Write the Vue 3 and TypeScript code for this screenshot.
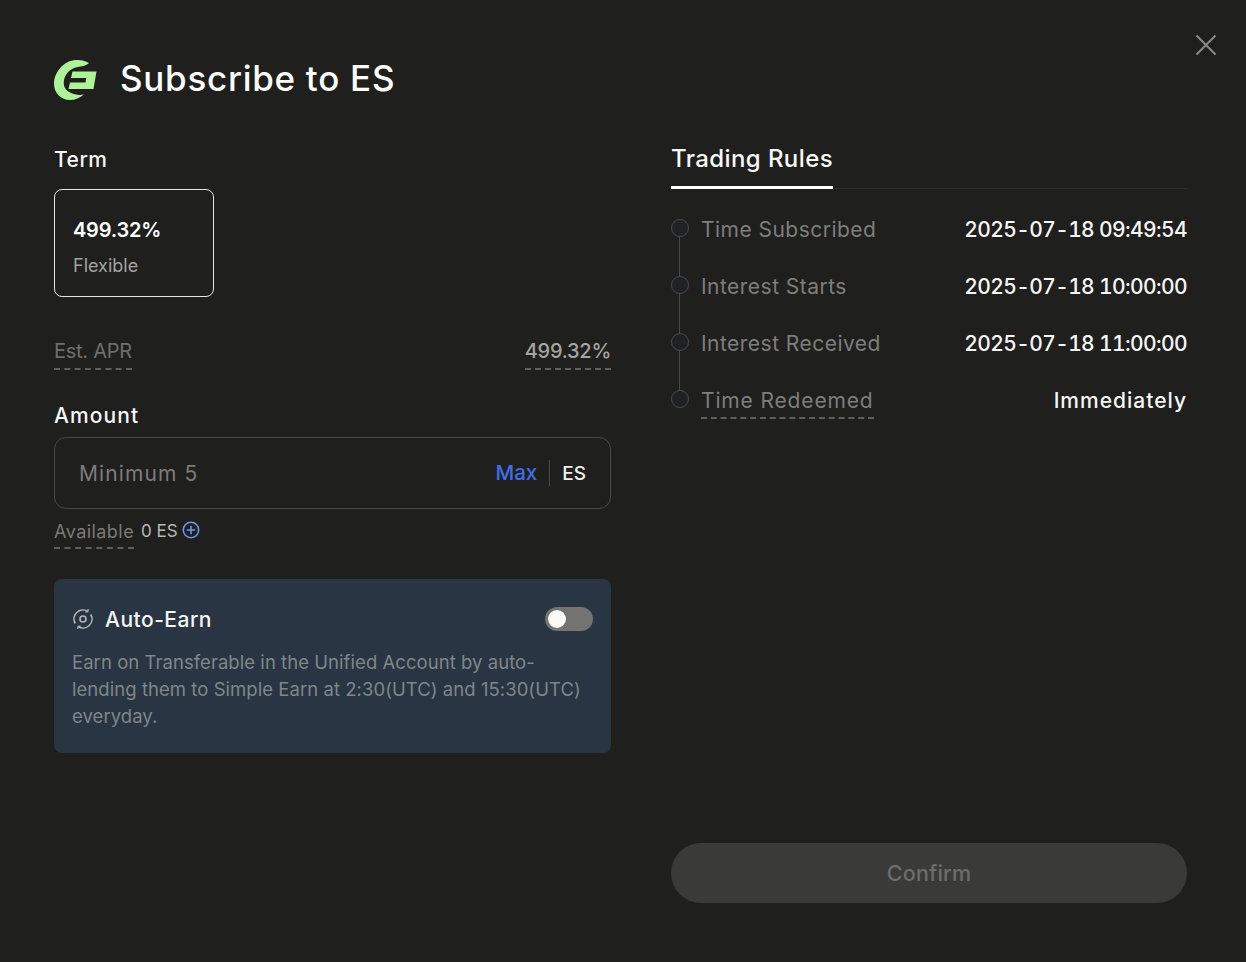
<script setup lang="ts">
const rules = [
  { label: 'Time Subscribed', value: '2025-07-18 09:49:54', dashed: false },
  { label: 'Interest Starts', value: '2025-07-18 10:00:00', dashed: false },
  { label: 'Interest Received', value: '2025-07-18 11:00:00', dashed: false },
  { label: 'Time Redeemed', value: 'Immediately', dashed: true },
]
</script>

<template>
  <div class="page">
    <button class="close" aria-label="Close">
      <svg width="22" height="22" viewBox="0 0 22 22"><path d="M1.5 1.5 20.5 20.5M20.5 1.5 1.5 20.5" stroke="#8a8a88" stroke-width="2" fill="none" /></svg>
    </button>
    <header class="head">
      <svg class="logo" width="43" height="41" viewBox="0 0 43 41">
        <path d="M35 4C31 1.500 26 0.500 22 1C10 1.500 0 13 0 25C0 34 7 41 16 41C21 41 26 39 30 35.500C25 36.500 20 35.500 16 33.500C11 31 9 27 10 21C11.500 14 17 9 24 8C27 7.500 32 7 35 4Z" fill="#aef29a" />
        <path d="M18.500 12.500H42.500L39.500 30H14.500L16 23.500H31.500L32.200 19H17Z" fill="#aef29a" />
      </svg>
      <h1>Subscribe to ES</h1>
    </header>
    <main class="cols">
      <section class="left">
        <div class="label term-label">Term</div>
        <div class="term">
          <strong>499.32%</strong>
          <span>Flexible</span>
        </div>
        <div class="apr">
          <span class="dash muted">Est. APR</span>
          <span class="dash apr-val">499.32%</span>
        </div>
        <div class="label amount-label">Amount</div>
        <div class="input">
          <span class="placeholder">Minimum 5</span>
          <span class="max">Max</span>
          <span class="unit">ES</span>
        </div>
        <div class="avail">
          <span class="dash muted">Available</span>
          <span class="bal">0 ES</span>
          <svg width="18" height="18" viewBox="0 0 18 18"><circle cx="9" cy="9" r="7.700" stroke="#6f9bf2" stroke-width="1.500" fill="none" /><path d="M9 4.800v8.400M4.800 9h8.400" stroke="#6f9bf2" stroke-width="1.500" /></svg>
        </div>
        <div class="earn">
          <div class="earn-top">
            <svg width="22" height="22" viewBox="0 0 22 22" fill="none" stroke="#b4b8bb" stroke-width="1.600">
              <path d="M3.200 15.500A9 9 0 0 1 15.800 3.400" />
              <path d="M18.800 6.500A9 9 0 0 1 6.200 18.600" />
              <path d="M16.300 1.200 15.800 3.600 13.300 3.800M5.700 20.800 6.200 18.400 8.700 18.200" stroke-width="1.300" />
              <circle cx="11" cy="11" r="3" />
            </svg>
            <span class="earn-title">Auto-Earn</span>
            <span class="toggle"><i></i></span>
          </div>
          <p>Earn on Transferable in the Unified Account by auto-lending them to Simple Earn at 2:30(UTC) and 15:30(UTC) everyday.</p>
        </div>
      </section>
      <section class="right">
        <div class="tabs"><span class="tab">Trading Rules</span></div>
        <ul class="timeline">
          <li v-for="r in rules" :key="r.label">
            <i class="dot"></i>
            <span class="rule-label" :class="{ dash: r.dashed }">{{ r.label }}</span>
            <span class="rule-value" :class="{ wide: r.dashed }">{{ r.value }}</span>
          </li>
        </ul>
        <button class="confirm">Confirm</button>
      </section>
    </main>
  </div>
</template>

<style>
html, body { background: #1f1f1d; }
</style>

<style scoped>
.page {
  position: relative;
  box-sizing: border-box;
  width: 1246px;
  height: 962px;
  padding: 58px 59px 59px 54px;
  background: #1f1f1d;
  color: #fff;
  font-family: Inter, "Liberation Sans", sans-serif;
  display: flex;
  flex-direction: column;
}
.close {
  position: absolute;
  top: 34px;
  left: 1195px;
  padding: 0;
  border: 0;
  background: none;
  line-height: 0;
}
.head { display: flex; align-items: center; gap: 23px; height: 41px; }
.logo { flex: none; margin-top: 1px; }
h1 { margin: 0; font-size: 35px; font-weight: 500; letter-spacing: 0.72px; line-height: 41px; color: #fcfcfb; }
.cols { flex: 1; display: flex; gap: 60px; margin-top: 43px; }
.left { width: 557px; flex: none; display: flex; flex-direction: column; padding-top: 4px; }
.right { flex: 1; display: flex; flex-direction: column; }
.label { font-size: 21px; font-weight: 500; line-height: 28px; color: #f6f6f5; }
.term-label { letter-spacing: 0.5px; }
.term {
  box-sizing: border-box;
  width: 160px;
  height: 108px;
  margin-top: 15px;
  padding: 27px 18px 0;
  border: 1px solid #e6e6e5;
  border-radius: 8px;
  display: flex;
  flex-direction: column;
  gap: 11px;
}
.term strong { font-size: 20px; font-weight: 600; line-height: 26px; letter-spacing: -0.2px; }
.term span { font-size: 18px; line-height: 24px; color: #a3a3a1; }
.apr { display: flex; justify-content: space-between; align-items: flex-start; margin-top: 40px; }
.dash { border-bottom: 2px dashed #5f5f5d; }
.muted { color: #6f6f6d; }
.apr .muted { font-size: 20px; line-height: 29px; padding-bottom: 2px; letter-spacing: -0.25px; }
.apr-val { color: #a5a5a3; font-size: 20px; line-height: 29px; padding-bottom: 2px; font-weight: 500; letter-spacing: -0.25px; }
.amount-label { margin-top: 32px; letter-spacing: 1.1px; }
.input {
  box-sizing: border-box;
  height: 72px;
  margin-top: 7px;
  padding: 0 24px;
  border: 1px solid #494947;
  border-radius: 12px;
  display: flex;
  align-items: center;
  font-size: 21px;
}
.placeholder { flex: 1; color: #7c7c7a; letter-spacing: 1.1px; }
.max { color: #3f6fe8; font-size: 20.500px; font-weight: 500; padding-right: 12px; border-right: 1px solid #494947; line-height: 26px; }
.unit { padding-left: 12px; font-size: 19px; font-weight: 500; color: #f0f0ee; }
.avail { display: flex; align-items: flex-start; font-size: 18px; line-height: 26px; margin-top: 9px; height: 40px; }
.avail .muted { line-height: 27px; padding-bottom: 2px; color: #7a7a78; letter-spacing: 0.45px; }
.bal { margin-left: 7px; font-size: 17px; line-height: 27px; color: #b8b8b6; }
.avail svg { margin: 3px 0 0 4px; }
.earn {
  box-sizing: border-box;
  height: 174px;
  margin-top: 21px;
  padding: 24px 18px 0;
  border-radius: 8px;
  background: #293542;
}
.earn-top { display: flex; align-items: center; gap: 11px; height: 32px; }
.earn-title { flex: 1; font-size: 21px; font-weight: 500; color: #f4f5f5; letter-spacing: 0.5px; }
.toggle {
  width: 48px;
  height: 24px;
  border-radius: 12px;
  background: #73736f;
  position: relative;
}
.toggle i {
  position: absolute;
  left: 3px;
  top: 3px;
  width: 18px;
  height: 18px;
  border-radius: 50%;
  background: #fbfbf7;
}
.earn p { margin: 14px 0 0; font-size: 18.500px; line-height: 27px; color: #7f868c; letter-spacing: 0.05px; }
.tabs { height: 60px; border-bottom: 1px solid #2e2e2d; box-sizing: border-box; margin-right: -1px; margin-top: -13px; }
.tab {
  display: inline-block;
  box-sizing: border-box;
  height: 60px;
  padding-top: 14px;
  border-bottom: 3px solid #fff;
  font-size: 24px;
  font-weight: 500;
  line-height: 32px;
  color: #f8f8f7;
  letter-spacing: 0.4px;
}
.timeline { list-style: none; margin: 24px 0 0; padding: 0; flex: 1; }
.timeline li {
  position: relative;
  height: 57px;
  display: flex;
  justify-content: space-between;
  align-items: flex-start;
  padding-left: 30px;
  font-size: 21px;
  line-height: 33px;
}
.dot {
  position: absolute;
  left: 0;
  top: 6px;
  box-sizing: border-box;
  width: 18px;
  height: 18px;
  border: 1.500px solid #4a4b4b;
  border-radius: 50%;
  background: #1f2124;
  z-index: 1;
}
.timeline li:not(:last-child)::after {
  content: "";
  position: absolute;
  left: 8px;
  top: 23px;
  width: 1px;
  height: 40px;
  background: #4a4b4b;
}
.rule-label { color: #7e7e7c; letter-spacing: 0.47px; }
.rule-label.dash { height: 33px; letter-spacing: 0.85px; }
.rule-value { color: #f6f6f5; font-weight: 500; font-variant-numeric: tabular-nums; letter-spacing: -0.63px; }
.rule-value.wide { letter-spacing: 1px; }
.confirm {
  height: 60px;
  border: 0;
  border-radius: 30px;
  background: #3a3a39;
  color: #6d6d6b;
  font: 500 21.500px Inter, "Liberation Sans", sans-serif;
  letter-spacing: 0.2px;
  flex: none;
}
</style>
